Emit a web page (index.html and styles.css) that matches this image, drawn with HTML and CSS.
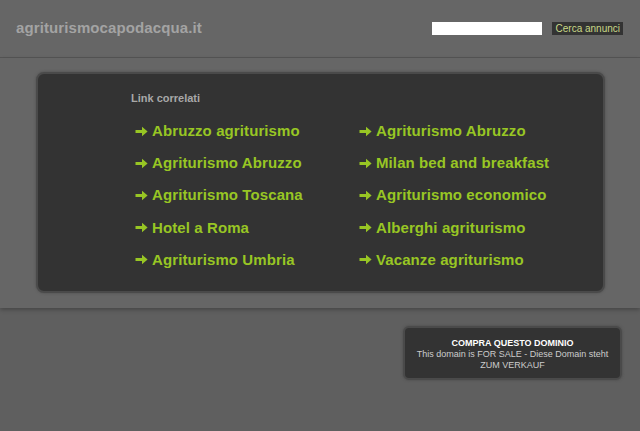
FILE: index.html
```html
<!DOCTYPE html>
<html>
<head>
<meta charset="utf-8">
<link rel="stylesheet" href="styles.css">
</head>
<body>
<div class="header">
  <div class="logo">agriturismocapodacqua.it</div>
  <div class="search">
    <input class="search-input" type="text">
    <span class="search-btn">Cerca annunci</span>
  </div>
</div>
<div class="main">
  <div class="box">
    <div class="box-title">Link correlati</div>
    <div class="links">
      <div class="col">
        <a class="link"><svg class="arr" viewBox="0 0 13 11"><path d="M0.5 4h6.5V0.8L12.6 5.5 7 10.2V7H0.5z"/></svg>Abruzzo agriturismo</a>
        <a class="link"><svg class="arr" viewBox="0 0 13 11"><path d="M0.5 4h6.5V0.8L12.6 5.5 7 10.2V7H0.5z"/></svg>Agriturismo Abruzzo</a>
        <a class="link"><svg class="arr" viewBox="0 0 13 11"><path d="M0.5 4h6.5V0.8L12.6 5.5 7 10.2V7H0.5z"/></svg>Agriturismo Toscana</a>
        <a class="link"><svg class="arr" viewBox="0 0 13 11"><path d="M0.5 4h6.5V0.8L12.6 5.5 7 10.2V7H0.5z"/></svg>Hotel a Roma</a>
        <a class="link"><svg class="arr" viewBox="0 0 13 11"><path d="M0.5 4h6.5V0.8L12.6 5.5 7 10.2V7H0.5z"/></svg>Agriturismo Umbria</a>
      </div>
      <div class="col">
        <a class="link"><svg class="arr" viewBox="0 0 13 11"><path d="M0.5 4h6.5V0.8L12.6 5.5 7 10.2V7H0.5z"/></svg>Agriturismo Abruzzo</a>
        <a class="link"><svg class="arr" viewBox="0 0 13 11"><path d="M0.5 4h6.5V0.8L12.6 5.5 7 10.2V7H0.5z"/></svg>Milan bed and breakfast</a>
        <a class="link"><svg class="arr" viewBox="0 0 13 11"><path d="M0.5 4h6.5V0.8L12.6 5.5 7 10.2V7H0.5z"/></svg>Agriturismo economico</a>
        <a class="link"><svg class="arr" viewBox="0 0 13 11"><path d="M0.5 4h6.5V0.8L12.6 5.5 7 10.2V7H0.5z"/></svg>Alberghi agriturismo</a>
        <a class="link"><svg class="arr" viewBox="0 0 13 11"><path d="M0.5 4h6.5V0.8L12.6 5.5 7 10.2V7H0.5z"/></svg>Vacanze agriturismo</a>
      </div>
    </div>
  </div>
</div>
<div class="footer">
  <div class="sale">
    <div class="sale-title">COMPRA QUESTO DOMINIO</div>
    <div class="sale-text">This domain is FOR SALE - Diese Domain steht ZUM VERKAUF</div>
  </div>
</div>
</body>
</html>
```
FILE: styles.css
```css
html, body {
  margin: 0;
  padding: 0;
  background: #5f5f5f;
  font-family: "Liberation Sans", Arial, sans-serif;
  height: 431px;
  overflow: hidden;
}
.header {
  height: 57px;
  background: #666;
  border-bottom: 1px solid #555;
  display: flex;
  justify-content: space-between;
  align-items: flex-start;
}
.logo {
  margin: 19px 0 0 16px;
  font-size: 15px;
  font-weight: bold;
  color: #a3a3a3;
  letter-spacing: 0.1px;
}
.search {
  display: flex;
  align-items: center;
  gap: 10px;
  margin: 22px 17px 0 0;
}
.search-input {
  width: 110px;
  height: 13px;
  box-sizing: border-box;
  border: none;
  padding: 0;
  margin: 0;
  background: #fff;
}
.search-btn {
  display: block;
  height: 13px;
  line-height: 13px;
  padding: 0 3px 0 4px;
  background: #333;
  color: #c9d987;
  font-size: 10px;
}
.main {
  background: #666;
  padding: 14px 35px 15px 36px;
  box-shadow: 0 2px 4px rgba(0,0,0,0.25);
  position: relative;
}
.box {
  height: 221px;
  box-sizing: border-box;
  background: #333;
  border: 2px solid #4a4a4a;
  border-radius: 8px;
  box-shadow: 0 0 2px 1px #5a5a5a;
  padding: 17px 0 0 93px;
}
.box-title {
  font-size: 11px;
  font-weight: bold;
  color: #a8a8a8;
  line-height: 14px;
}
.links {
  display: flex;
  margin-top: 10px;
  padding-left: 4px;
}
.col {
  display: flex;
  flex-direction: column;
  width: 224px;
}
.link {
  display: flex;
  align-items: center;
  font-size: 15px;
  font-weight: bold;
  color: #98c624;
  line-height: 32.2px;
  height: 32.2px;
  white-space: nowrap;
  letter-spacing: 0.1px;
}
.arr {
  width: 13px;
  height: 11px;
  margin-right: 4px;
  fill: #98c624;
}
.footer {
  display: flex;
  justify-content: flex-end;
  padding: 18px 18px 0 0;
}
.sale {
  width: 219px;
  height: 54px;
  box-sizing: border-box;
  background: #333;
  border: 2px solid #4a4a4a;
  border-radius: 6px;
  box-shadow: 0 0 2px 1px #555;
  text-align: center;
  padding: 9px 6px 0;
}
.sale-title {
  font-size: 9px;
  font-weight: bold;
  color: #fff;
  line-height: 12px;
}
.sale-text {
  font-size: 9px;
  color: #ccc;
  line-height: 11px;
}
```
